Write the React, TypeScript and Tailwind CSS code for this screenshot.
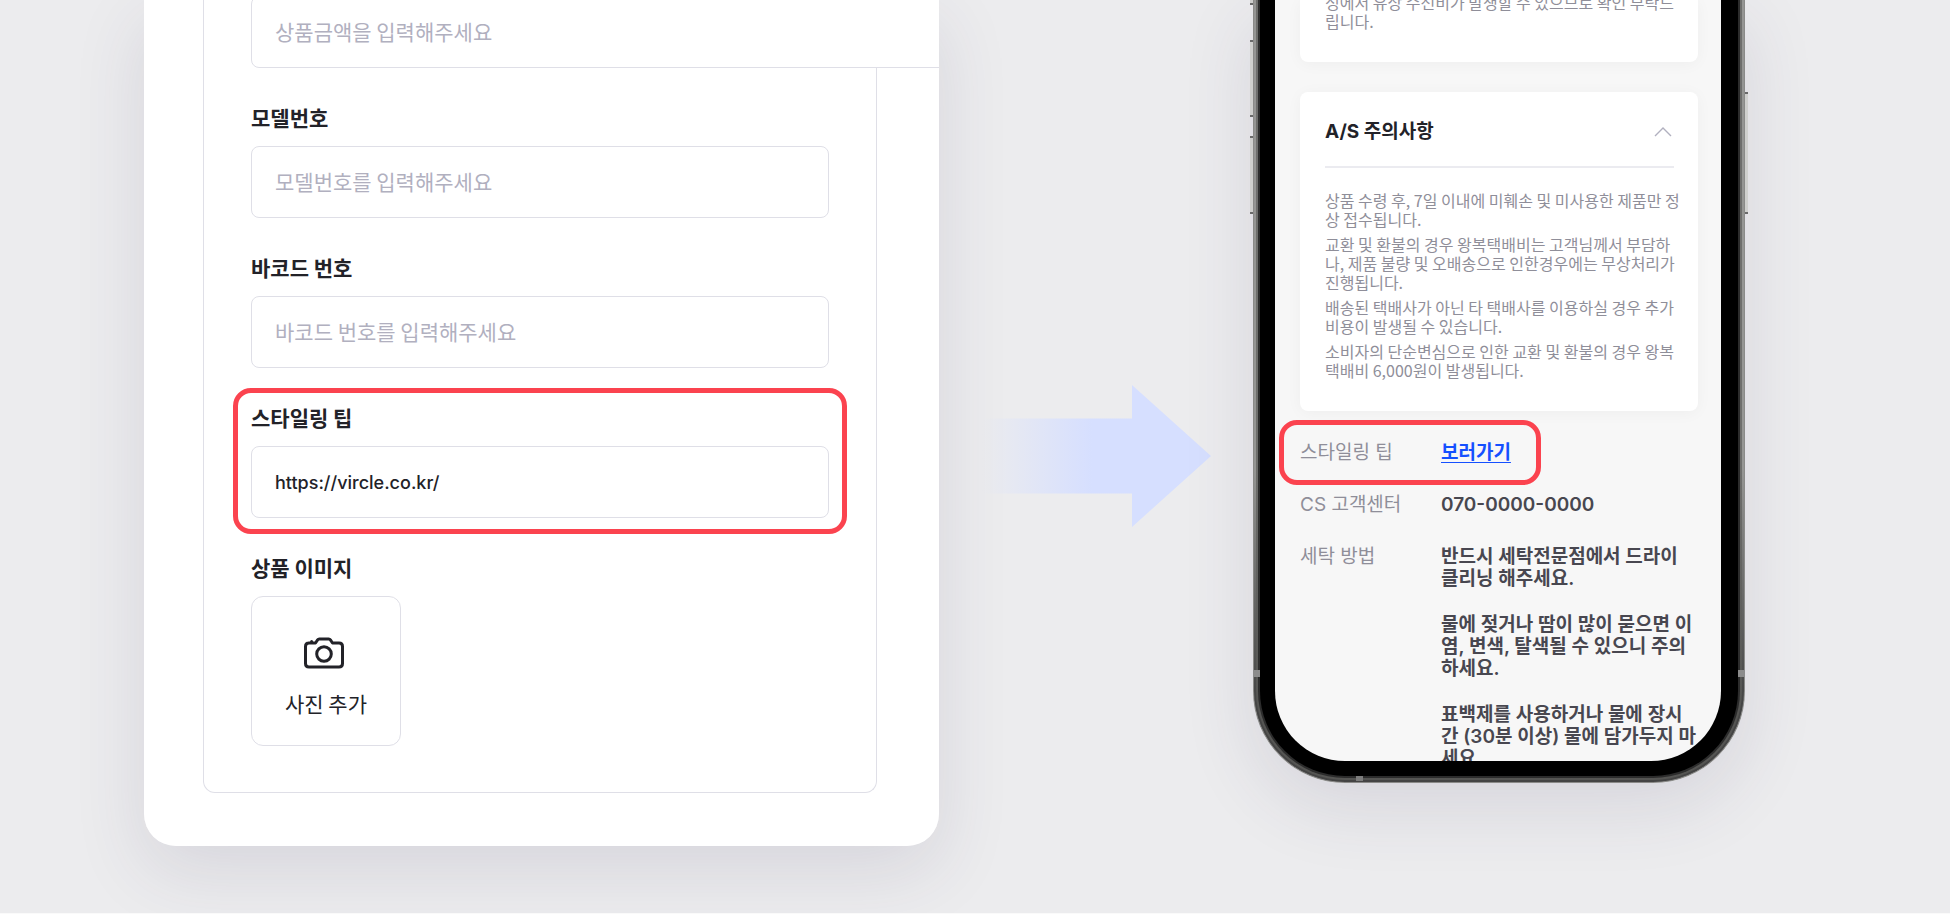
import React from "react";

const KR = "font-['Noto_Sans_CJK_KR',sans-serif]";
const MIXED = "font-['Inter','Noto_Sans_CJK_KR',sans-serif]";

function Camera() {
  return (
    <svg viewBox="0 0 44 32" className="h-8 w-11" fill="none" stroke="#222228" strokeWidth="3" strokeLinejoin="round" strokeLinecap="round" aria-hidden="true">
      <path d="M4.5 6H11.5L13.6 2.9Q14.2 2 15.3 2H24.7Q25.8 2 26.4 2.9L28.5 6H35Q38.5 6 38.5 9.5V26.5Q38.5 30 35 30H5Q1.5 30 1.5 26.5V9.5Q1.5 6 5 6" />
      <circle cx="20" cy="17" r="7.3" />
      <path d="M7.6 4.4V5" />
    </svg>
  );
}

function Arrow() {
  return (
    <svg viewBox="0 0 232 142" className="h-[142px] w-[232px] shrink-0" aria-hidden="true">
      <defs>
        <linearGradient id="shaft" gradientUnits="userSpaceOnUse" x1="2" y1="0" x2="112" y2="0">
          <stop offset="0" stopColor="#d6dfff" stopOpacity="0" />
          <stop offset="1" stopColor="#d6dfff" />
        </linearGradient>
      </defs>
      <path d="M2 33.5H152V0L231 71L152 142V108.5H2Z" fill="url(#shaft)" />
    </svg>
  );
}

interface FieldProps {
  id: string;
  label: string;
  placeholder?: string;
  value?: string;
  highlighted?: boolean;
}

function Field({ id, label, placeholder, value, highlighted }: FieldProps) {
  return (
    <div className="relative flex flex-col gap-[15px]">
      {highlighted && (
        <span className="pointer-events-none absolute -inset-x-[18px] -top-[15px] -bottom-4 rounded-[18px] border-5 border-[#fb434f]" />
      )}
      <label htmlFor={id} className="text-[21px] leading-7 font-bold text-[#222228]">
        {label}
      </label>
      <input
        id={id}
        type="text"
        placeholder={placeholder}
        defaultValue={value}
        className={
          "h-[72px] w-full rounded-lg border border-[#dfdfe7] bg-white px-[23px] text-[#222228] outline-none placeholder:text-[#b1b0bf] " +
          (value ? "font-['Inter',sans-serif] text-lg font-medium" : "pb-[3px] text-[21px]")
        }
      />
    </div>
  );
}

function ProductForm() {
  return (
    <section className="w-[795px] shrink-0 overflow-hidden rounded-b-[32px] bg-white pr-[62px] pb-[53px] pl-[59px]">
      <form className="flex flex-col gap-[35px] rounded-b-xl border-x border-b border-[#dfdfe7] px-[47px] pb-[46px]">
        <input
          type="text"
          aria-label="상품금액"
          placeholder="상품금액을 입력해주세요"
          className="relative -mt-1 h-[72px] w-[720px] rounded-lg border border-[#dfdfe7] bg-white px-[23px] pb-[3px] text-[21px] text-[#222228] outline-none placeholder:text-[#b1b0bf]"
        />
        <Field id="model" label="모델번호" placeholder="모델번호를 입력해주세요" />
        <Field id="barcode" label="바코드 번호" placeholder="바코드 번호를 입력해주세요" />
        <Field id="styling" label="스타일링 팁" value="https://vircle.co.kr/" highlighted />
        <div className="flex flex-col gap-[15px]">
          <h2 className="text-[21px] leading-7 font-bold text-[#222228]">상품 이미지</h2>
          <button type="button" className="flex size-[150px] flex-col items-center justify-center gap-5 rounded-xl border border-[#dfdfe7] bg-white pt-3 text-[21px] leading-7 text-[#222228]">
            <Camera />
            사진 추가
          </button>
        </div>
      </form>
    </section>
  );
}

const notices: string[][] = [
  ["상품 수령 후, 7일 이내에 미훼손 및 미사용한 제품만 정", "상 접수됩니다."],
  ["교환 및 환불의 경우 왕복택배비는 고객님께서 부담하", "나, 제품 불량 및 오배송으로 인한경우에는 무상처리가", "진행됩니다."],
  ["배송된 택배사가 아닌 타 택배사를 이용하실 경우 추가", "비용이 발생될 수 있습니다."],
  ["소비자의 단순변심으로 인한 교환 및 환불의 경우 왕복", "택배비 6,000원이 발생됩니다."],
];

const washing: string[][] = [
  ["반드시 세탁전문점에서 드라이", "클리닝 해주세요."],
  ["물에 젖거나 땀이 많이 묻으면 이", "염, 변색, 탈색될 수 있으니 주의", "하세요."],
  ["표백제를 사용하거나 물에 장시", "간 (30분 이상) 물에 담가두지 마", "세요."],
];

function Lines({ lines }: { lines: string[] }) {
  return (
    <p className="whitespace-nowrap">
      {lines.map((line) => (
        <span key={line} className="block">
          {line}
        </span>
      ))}
    </p>
  );
}

function Phone() {
  return (
    <section className="relative h-[783px] w-[492px] shrink-0 rounded-b-[92px] shadow-[0_24px_72px_rgba(60,50,90,0.12)]">
      <span className="absolute top-0 -left-[3px] h-[5px] w-1 border-b-2 border-[#6a6a6a] bg-[#cfcfcd]" />
      <span className="absolute top-10 -left-[3px] h-[77px] w-1 border-y-2 border-[#6a6a6a] bg-[#cfcfcd]" />
      <span className="absolute top-[136px] -left-[3px] h-[78px] w-1 border-y-2 border-[#6a6a6a] bg-[#cfcfcd]" />
      <span className="absolute top-[92px] -right-[3px] h-[122px] w-1 border-y-2 border-[#6a6a6a] bg-[#cfcfcd]" />
      <div className="relative h-full rounded-b-[92px] border-x border-b border-[#8a8a88] bg-linear-to-b from-[#959593] from-60% to-[#444444] to-90% px-[2px] pb-[2px]">
        <div className="h-full rounded-b-[89px] bg-linear-to-b from-[#6e6e6c] from-60% to-[#555553] to-90% px-[2px] pb-[2px]">
          <div className="h-full rounded-b-[87px] bg-[#2c2c2c] px-[2px] pb-[2px]">
            <div className="h-full rounded-b-[85px] bg-black pr-[17px] pb-[15px] pl-[15px]">
              <div className="h-full overflow-hidden rounded-b-[70px] bg-[#f7f7f7] pr-[23px] pl-[25px]">
                <PhoneContent />
              </div>
            </div>
          </div>
        </div>
      </div>
      <span className="absolute top-[670px] left-0 h-[7px] w-[7px] bg-[#8c8c8c]" />
      <span className="absolute top-[670px] right-0 h-[7px] w-[7px] bg-[#8c8c8c]" />
      <span className="absolute bottom-[2px] left-[103px] h-[5px] w-[7px] bg-[#7c7c7c]" />
    </section>
  );
}

function PhoneContent() {
  return (
    <div className="flex flex-col gap-[30px]">
      <article className="rounded-b-lg bg-white px-[25px] pb-[31px] text-base leading-[19px] text-[#8f8e99] shadow-[0_2px_16px_rgba(0,0,0,0.04)]">
        <div className="-mt-[7px]">
          <Lines lines={["정에서 유상 수선비가 발생할 수 있으므로 확인 부탁드", "립니다."]} />
        </div>
      </article>
      <article className="rounded-lg bg-white pr-[24px] pl-[25px] pb-[31px] shadow-[0_2px_16px_rgba(0,0,0,0.04)]">
        <button type="button" aria-expanded="true" className={`flex h-[76px] w-full items-center justify-between border-b-2 border-[#ebebf0] pt-[6px] text-[19px] font-bold text-[#222228] ${MIXED}`}>
          A/S 주의사항
          <svg viewBox="0 0 18 10" className="mr-[2px] h-[10px] w-[18px]" fill="none" stroke="#b1b0bf" strokeWidth="1.4" aria-hidden="true">
            <path d="M1 9L9 1L17 9" />
          </svg>
        </button>
        <div className="mt-[23px] flex flex-col gap-[6px] text-base leading-[19px] text-[#8f8e99]">
          {notices.map((lines) => (
            <Lines key={lines[0]} lines={lines} />
          ))}
        </div>
      </article>
      <dl className={`mt-px flex flex-col gap-[30px] text-[19px] leading-[22px] ${MIXED}`}>
        <div className="relative flex">
          <span className="pointer-events-none absolute -top-[22px] -left-[21px] h-[65px] w-[262px] rounded-[18px] border-5 border-[#fb434f]" />
          <dt className="w-[141px] shrink-0 text-[#8f8e99]">스타일링 팁</dt>
          <dd>
            <a href="https://vircle.co.kr/" className="font-bold text-[#1550ff] underline decoration-1 underline-offset-3">
              보러가기
            </a>
          </dd>
        </div>
        <div className="flex">
          <dt className="w-[141px] shrink-0 text-[#8f8e99]">CS 고객센터</dt>
          <dd className="font-semibold text-[#484750]">070-0000-0000</dd>
        </div>
        <div className="flex">
          <dt className="w-[141px] shrink-0 text-[#8f8e99]">세탁 방법</dt>
          <dd className="flex flex-col gap-6 font-semibold text-[#484750]">
            {washing.map((lines) => (
              <Lines key={lines[0]} lines={lines} />
            ))}
          </dd>
        </div>
      </dl>
    </div>
  );
}

export default function App() {
  return (
    <main className={`flex min-h-screen items-start justify-between overflow-hidden border-b border-[#fafafa] bg-[#ececee] pr-[205px] pl-36 ${KR}`}>
      <div className="rounded-b-[32px] shadow-[0_24px_72px_rgba(60,50,90,0.12)]">
        <ProductForm />
      </div>
      <div className="mt-[385px]">
        <Arrow />
      </div>
      <Phone />
    </main>
  );
}
